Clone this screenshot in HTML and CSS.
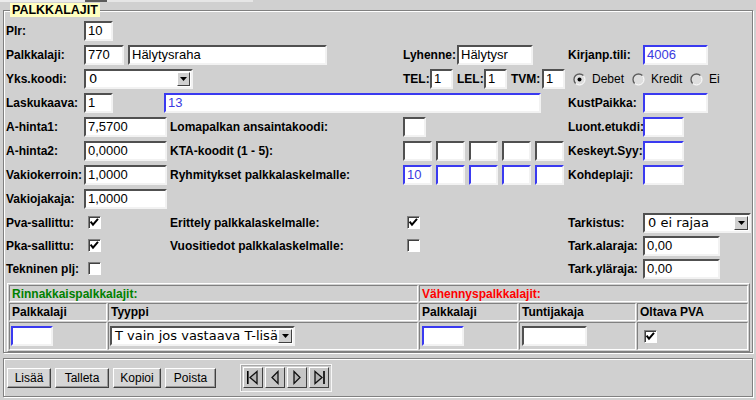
FILE: index.html
```html
<!DOCTYPE html>
<html lang="fi">
<head>
<meta charset="utf-8">
<title>Palkkalajit</title>
<link rel="stylesheet" href="styles.css">
</head>
<body>
<div class="topbar"><span class="tb-a"></span><span class="tb-b"></span><span class="tb-c"></span></div>
<fieldset class="panel">
  <legend>PALKKALAJIT</legend>

  <div class="row">
    <span class="lbl">Plr:</span>
    <span class="field w29">10</span>
  </div>

  <div class="row">
    <span class="lbl">Palkkalaji:</span>
    <div class="group c2-4"><span class="field w40">770</span><span class="field w199">Hälytysraha</span></div>
    <div class="group tight c4"><span class="lbl lw54">Lyhenne:</span><span class="field w76">Hälytysr</span></div>
    <span class="lbl c5">Kirjanp.tili:</span>
    <span class="field blue w65">4006</span>
  </div>

  <div class="row">
    <span class="lbl">Yks.koodi:</span>
    <div class="select w109 c2-4"><span class="sel-text">0</span><span class="sel-btn narrow"><svg width="7" height="4" viewBox="0 0 7 4"><polygon points="0,0 7,0 3.5,4" fill="#000"/></svg></span></div>
    <div class="group tight c4">
      <span class="lbl lw27">TEL:</span><span class="field w23">1</span>
      <span class="lbl lw27 ml4">LEL:</span><span class="field w23">1</span>
      <span class="lbl lw31 ml4">TVM:</span><span class="field w23">1</span>
    </div>
    <div class="group tight radios c5-7">
      <span class="radio"><svg width="13" height="13" viewBox="0 0 13 13"><circle cx="6.5" cy="6.5" r="5.5" fill="#dedede" stroke="#ffffff"/><path d="M2.6 10.4 A5.5 5.5 0 0 1 10.4 2.6" fill="none" stroke="#5a5a5a" stroke-width="1.4"/><circle cx="6.5" cy="6.5" r="2" fill="#000"/></svg></span>
      <span class="rlabel rw40">Debet</span>
      <span class="radio"><svg width="13" height="13" viewBox="0 0 13 13"><circle cx="6.5" cy="6.5" r="5.5" fill="#dedede" stroke="#ffffff"/><path d="M2.6 10.4 A5.5 5.5 0 0 1 10.4 2.6" fill="none" stroke="#5a5a5a" stroke-width="1.4"/></svg></span>
      <span class="rlabel rw39">Kredit</span>
      <span class="radio"><svg width="13" height="13" viewBox="0 0 13 13"><circle cx="6.5" cy="6.5" r="5.5" fill="#dedede" stroke="#ffffff"/><path d="M2.6 10.4 A5.5 5.5 0 0 1 10.4 2.6" fill="none" stroke="#5a5a5a" stroke-width="1.4"/></svg></span>
      <span class="rlabel">Ei</span>
    </div>
  </div>

  <div class="row">
    <span class="lbl">Laskukaava:</span>
    <div class="group tight c2-5"><span class="field w29">1</span><span class="field blue w377 ml51">13</span></div>
    <span class="lbl c5">KustPaikka:</span>
    <span class="field blue w65">&nbsp;</span>
  </div>

  <div class="row">
    <span class="lbl">A-hinta1:</span>
    <span class="field w83">7,5700</span>
    <span class="lbl">Lomapalkan ansaintakoodi:</span>
    <span class="field w23">&nbsp;</span>
    <span class="lbl">Luont.etukdi:</span>
    <span class="field blue w41">&nbsp;</span>
  </div>

  <div class="row">
    <span class="lbl">A-hinta2:</span>
    <span class="field w83">0,0000</span>
    <span class="lbl">KTA-koodit (1 - 5):</span>
    <div class="group"><span class="field w29">&nbsp;</span><span class="field w29">&nbsp;</span><span class="field w29">&nbsp;</span><span class="field w29">&nbsp;</span><span class="field w29">&nbsp;</span></div>
    <span class="lbl">Keskeyt.Syy:</span>
    <span class="field blue w41">&nbsp;</span>
  </div>

  <div class="row">
    <span class="lbl">Vakiokerroin:</span>
    <span class="field w83">1,0000</span>
    <span class="lbl">Ryhmitykset palkkalaskelmalle:</span>
    <div class="group"><span class="field blue w29">10</span><span class="field blue w29">&nbsp;</span><span class="field blue w29">&nbsp;</span><span class="field blue w29">&nbsp;</span><span class="field blue w29">&nbsp;</span></div>
    <span class="lbl">Kohdeplaji:</span>
    <span class="field blue w41">&nbsp;</span>
  </div>

  <div class="row">
    <span class="lbl">Vakiojakaja:</span>
    <span class="field w83">1,0000</span>
  </div>

  <div class="row short">
    <span class="lbl">Pva-sallittu:</span>
    <span class="cb ml4"><svg width="11" height="11" viewBox="0 0 11 11"><path d="M1.6 4.6 L4 7.6 L9 1.8" fill="none" stroke="#000" stroke-width="2"/></svg></span>
    <span class="lbl">Erittely palkkalaskelmalle:</span>
    <span class="cb ml4"><svg width="11" height="11" viewBox="0 0 11 11"><path d="M1.6 4.6 L4 7.6 L9 1.8" fill="none" stroke="#000" stroke-width="2"/></svg></span>
    <span class="lbl">Tarkistus:</span>
    <div class="select"><span class="sel-text">0 ei rajaa</span><span class="sel-btn"><svg width="7" height="4" viewBox="0 0 7 4"><polygon points="0,0 7,0 3.5,4" fill="#000"/></svg></span></div>
  </div>

  <div class="row short">
    <span class="lbl">Pka-sallittu:</span>
    <span class="cb ml4"><svg width="11" height="11" viewBox="0 0 11 11"><path d="M1.6 4.6 L4 7.6 L9 1.8" fill="none" stroke="#000" stroke-width="2"/></svg></span>
    <span class="lbl">Vuositiedot palkkalaskelmalle:</span>
    <span class="cb ml4"></span>
    <span class="lbl">Tark.alaraja:</span>
    <span class="field w77">0,00</span>
  </div>

  <div class="row short">
    <span class="lbl">Tekninen plj:</span>
    <span class="cb ml4"></span>
    <span class="lbl c5">Tark.yläraja:</span>
    <span class="field w77">0,00</span>
  </div>

  <div class="tbl">
    <div class="cell span2 green">Rinnakkaispalkkalajit:</div>
    <div class="cell span3 red">Vähennyspalkkalajit:</div>
    <div class="cell head">Palkkalaji</div>
    <div class="cell head">Tyyppi</div>
    <div class="cell head">Palkkalaji</div>
    <div class="cell head">Tuntijakaja</div>
    <div class="cell head">Oltava PVA</div>
    <div class="cell"><span class="field blue w42 mlm1">&nbsp;</span></div>
    <div class="cell"><div class="select w185 mlm1"><span class="sel-text">T vain jos vastaava T-lisä</span><span class="sel-btn"><svg width="7" height="4" viewBox="0 0 7 4"><polygon points="0,0 7,0 3.5,4" fill="#000"/></svg></span></div></div>
    <div class="cell"><span class="field blue w42">&nbsp;</span></div>
    <div class="cell"><span class="field w65">&nbsp;</span></div>
    <div class="cell"><span class="cb ml4"><svg width="11" height="11" viewBox="0 0 11 11"><path d="M1.6 4.6 L4 7.6 L9 1.8" fill="none" stroke="#000" stroke-width="2"/></svg></span></div>
  </div>
</fieldset>

<div class="bar">
  <span class="btn bw44">Lisää</span>
  <span class="btn bw54">Talleta</span>
  <span class="btn bw48">Kopioi</span>
  <span class="btn bw51">Poista</span>
  <div class="nav">
    <span class="nbtn"><svg width="18" height="18" viewBox="0 0 18 18"><rect x="3" y="3" width="1.6" height="13" fill="#000"/><polygon points="13,3.5 6,9.5 13,15.5" fill="#b4b4b4" stroke="#111" stroke-width="1.3"/></svg></span>
    <span class="nbtn"><svg width="18" height="18" viewBox="0 0 18 18"><polygon points="12,3.5 6,9.5 12,15.5" fill="#b4b4b4" stroke="#111" stroke-width="1.3"/></svg></span>
    <span class="nbtn"><svg width="18" height="18" viewBox="0 0 18 18"><polygon points="6,3.5 12,9.5 6,15.5" fill="#b4b4b4" stroke="#111" stroke-width="1.3"/></svg></span>
    <span class="nbtn"><svg width="18" height="18" viewBox="0 0 18 18"><polygon points="5,3.5 12,9.5 5,15.5" fill="#b4b4b4" stroke="#111" stroke-width="1.3"/><rect x="13.2" y="3" width="1.6" height="13" fill="#000"/></svg></span>
  </div>
</div>
</body>
</html>
```

FILE: styles.css
```css
* { box-sizing: border-box; }
html, body { margin: 0; padding: 0; }
body {
  width: 756px;
  height: 400px;
  overflow: hidden;
  background: #d0d0d0;
  color: #000;
  font-family: "Liberation Sans", Arial, sans-serif;
  font-size: 12px;
}

.topbar { display: flex; height: 3px; }
.tb-a { width: 85px; height: 2px; background: #ececec; }
.tb-b { width: 22px; height: 2px; background: #5a5a5a; }
.tb-c { width: 146px; height: 2px; background: #e6e6e6; }

.panel {
  margin: 0 3px;
  padding: 2px 1px 0 2px;
  min-width: 0;
  border: 1px solid #808080;
  box-shadow: inset 1px 1px 0 #ffffff, 1px 1px 0 #ffffff;
}
.panel > legend {
  margin-left: 4px;
  padding: 0 2px;
  height: 14px;
  line-height: 14px;
  background: #ffffc0;
  font-weight: bold;
  font-size: 12.5px;
}

.row {
  display: grid;
  grid-template-columns: 78px 86px 233px 165px 75px 1fr;
  height: 24px;
  align-items: center;
}
.row.short { height: 23px; }

.c2-4 { grid-column: 2 / 4; }
.c2-5 { grid-column: 2 / 5; }
.c4 { grid-column: 4; }
.c5 { grid-column: 5; }
.c5-7 { grid-column: 5 / 7; }

.lbl { font-weight: bold; white-space: nowrap; }
.lw54 { width: 54px; flex: none; }
.lw27 { width: 27px; flex: none; }
.lw31 { width: 31px; flex: none; }

.group { display: flex; align-items: center; gap: 4px; }
.group.tight { gap: 0; }

.field {
  display: block;
  flex: none;
  height: 20px;
  padding: 0 2px;
  border: 2px solid;
  border-color: #505050 #f2f2f2 #f2f2f2 #505050;
  background: #ffffff;
  font-size: 13px;
  line-height: 16px;
  white-space: nowrap;
  overflow: hidden;
}
.field.blue {
  border-color: #3a3af0 #f2f2f2 #f2f2f2 #3a3af0;
  color: #3a3ae0;
}
.w23 { width: 23px; }
.w29 { width: 29px; }
.w40 { width: 40px; }
.w41 { width: 41px; }
.w42 { width: 42px; }
.w65 { width: 65px; }
.w76 { width: 76px; }
.w77 { width: 77px; }
.w83 { width: 83px; }
.w109 { width: 109px; }
.w185 { width: 185px; }
.w199 { width: 199px; }
.w377 { width: 377px; }
.ml4 { margin-left: 4px; }
.ml51 { margin-left: 51px; }
.mlm1 { margin-left: -1px; }

.select {
  display: flex;
  align-items: center;
  height: 20px;
  padding: 1px;
  border: 2px solid;
  border-color: #505050 #f2f2f2 #f2f2f2 #505050;
  background: #ffffff;
}
.sel-text {
  flex: 1;
  min-width: 0;
  padding-left: 2px;
  font-family: "DejaVu Sans", sans-serif;
  font-size: 13px;
  line-height: 14px;
  white-space: nowrap;
  overflow: hidden;
}
.sel-btn {
  flex: none;
  width: 14px;
  height: 14px;
  display: flex;
  align-items: center;
  justify-content: center;
  background: #d0d0d0;
  border: 1px solid;
  border-color: #ffffff #404040 #404040 #ffffff;
}
.sel-btn.narrow { width: 13px; }

.radios { margin-left: 5px; }
.radio { display: flex; width: 13px; height: 13px; flex: none; margin-right: 6px; }
.rlabel { white-space: nowrap; font-size: 12px; }
.rw40 { width: 40px; flex: none; }
.rw39 { width: 39px; flex: none; }

.cb {
  display: flex;
  align-items: center;
  justify-content: center;
  width: 13px;
  height: 13px;
  border: 1px solid;
  border-color: #808080 #ffffff #ffffff #808080;
  box-shadow: inset 1px 1px 0 #404040;
  background: #ffffff;
}

.tbl {
  display: grid;
  grid-template-columns: 98px 310px 99px 117px 1fr;
  grid-template-rows: 17px 18px 28px;
  gap: 1px;
  width: 743px;
  margin: 3px 0 0 1px;
  padding: 1px;
  border: 1px solid;
  border-color: #ffffff #808080 #808080 #ffffff;
}
.cell {
  display: flex;
  align-items: center;
  padding-left: 2px;
  border: 1px solid;
  border-color: #808080 #ffffff #ffffff #808080;
  white-space: nowrap;
}
.span2 { grid-column: span 2; }
.span3 { grid-column: span 3; }
.head, .green, .red { font-weight: bold; }
.green { color: #008000; }
.red { color: #ff0000; }

.bar {
  display: flex;
  align-items: center;
  gap: 4px;
  height: 39px;
  margin: 5px 3px 0;
  padding-left: 3px;
  border: 1px solid #808080;
  box-shadow: inset 1px 1px 0 #ffffff, 1px 1px 0 #ffffff;
}
.btn {
  display: flex;
  align-items: center;
  justify-content: center;
  height: 20px;
  border: 1px solid;
  border-color: #ffffff #404040 #404040 #ffffff;
  box-shadow: inset -1px -1px 0 #9a9a9a;
  background: #d6d6d6;
  font-size: 12px;
}
.bw44 { width: 44px; }
.bw54 { width: 54px; }
.bw48 { width: 48px; }
.bw51 { width: 51px; }

.nav {
  display: flex;
  gap: 2px;
  margin-left: 20px;
  padding: 2px 2px 3px;
  border: 1px solid #f6f6f6;
  box-shadow: inset 1px 1px 0 #a8a8a8;
}
.nbtn {
  display: flex;
  width: 20px;
  height: 21px;
  border: 1px solid;
  border-color: #ffffff #404040 #404040 #ffffff;
  background: #c6c6c6;
}
```
